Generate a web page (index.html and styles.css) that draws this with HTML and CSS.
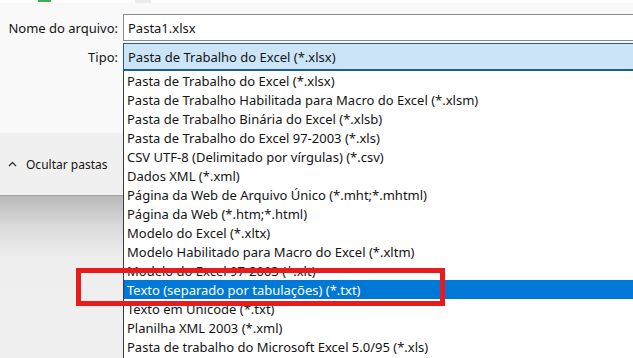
FILE: index.html
```html
<!DOCTYPE html>
<html>
<head>
  <meta charset="UTF-8">
  <title>Salvar como</title>
  <link rel="stylesheet" href="styles.css">
</head>
<body>
  <div class="page">
    <div class="strip">
      <span class="strip-icon"></span>
      <span class="strip-tab"></span>
    </div>

    <div class="dialog">
      <div class="side">
        <div class="labels">
          <div class="label label-name">Nome do arquivo:</div>
          <div class="label label-type">Tipo:</div>
        </div>
        <div class="side-fill"></div>
        <div class="footer">
          <svg class="chevron" width="9" height="6" viewBox="0 0 9 6">
            <polyline points="1,5 4.5,1.5 8,5" fill="none" stroke="#333" stroke-width="1.3"/>
          </svg>
          <span>Ocultar pastas</span>
        </div>
        <div class="dim"></div>
      </div>

      <div class="main">
        <div class="field">Pasta1.xlsx</div>
        <div class="combo">Pasta de Trabalho do Excel (*.xlsx)</div>
        <ul class="list">
          <li>Pasta de Trabalho do Excel (*.xlsx)</li>
          <li>Pasta de Trabalho Habilitada para Macro do Excel (*.xlsm)</li>
          <li>Pasta de Trabalho Binária do Excel (*.xlsb)</li>
          <li>Pasta de Trabalho do Excel 97-2003 (*.xls)</li>
          <li>CSV UTF-8 (Delimitado por vírgulas) (*.csv)</li>
          <li>Dados XML (*.xml)</li>
          <li>Página da Web de Arquivo Único (*.mht;*.mhtml)</li>
          <li>Página da Web (*.htm;*.html)</li>
          <li>Modelo do Excel (*.xltx)</li>
          <li>Modelo Habilitado para Macro do Excel (*.xltm)</li>
          <li>Modelo do Excel 97-2003 (*.xlt)</li>
          <li class="selected">Texto (separado por tabulações) (*.txt)</li>
          <li>Texto em Unicode (*.txt)</li>
          <li>Planilha XML 2003 (*.xml)</li>
          <li>Pasta de trabalho do Microsoft Excel 5.0/95 (*.xls)</li>
        </ul>
      </div>
    </div>

    <div class="highlight-box"></div>
  </div>
</body>
</html>
```

FILE: styles.css
```css
:root {
  --panel: #f9f9f9;
  --footer: #f0f0f0;
  --text: #141414;
  --field-border: #8a8a8a;
  --combo-bg: #cce4f7;
  --combo-border: #1d5f93;
  --select-blue: #0078d7;
  --mark-red: #e81c1c;
}

html, body {
  margin: 0;
  padding: 0;
}

body {
  width: 633px;
  height: 358px;
  overflow: hidden;
  background: var(--panel);
  color: var(--text);
  font-family: 'Noto Sans', 'Open Sans', sans-serif;
  font-size: 13px;
}

.page {
  position: relative;
  display: flex;
  flex-direction: column;
  height: 358px;
}

.strip {
  display: flex;
  height: 3px;
  background: #fdfdfd;
}

.strip-icon {
  width: 13px;
  height: 2px;
  margin-left: 38px;
  background: #3fae55;
}

.strip-tab {
  width: 16px;
  height: 3px;
  margin-left: 84px;
  background: #ebebeb;
}

.dialog {
  display: flex;
  flex: 1;
  min-height: 0;
}

/* left column */

.side {
  display: flex;
  flex-direction: column;
  width: 123px;
  flex-shrink: 0;
}

.labels {
  display: flex;
  flex-direction: column;
  gap: 2px;
  padding-top: 11px;
}

.label {
  display: flex;
  align-items: center;
  justify-content: flex-end;
  padding-right: 5px;
  white-space: nowrap;
}

.label-name {
  height: 27px;
}

.label-type {
  height: 28px;
}

.side-fill {
  height: 62px;
  background: var(--panel);
}

.footer {
  display: flex;
  align-items: center;
  gap: 9px;
  height: 63px;
  padding-left: 8px;
  background: var(--footer);
  border-bottom: 1px solid #a3a3a3;
  box-sizing: border-box;
  font-size: 12px;
  white-space: nowrap;
}

.chevron {
  flex-shrink: 0;
}

.dim {
  flex: 1;
  background: linear-gradient(to bottom, #b9b9b9 0px, #dadada 30px, #eeeeee 62px, #f0f0f0 100%);
}

/* right column */

.main {
  display: flex;
  flex-direction: column;
  flex: 1;
  padding-top: 11px;
  gap: 2px;
  min-width: 0;
}

.field {
  display: flex;
  align-items: center;
  height: 27px;
  padding-left: 4px;
  background: #ffffff;
  border: 1px solid var(--field-border);
  border-right: none;
  box-sizing: border-box;
}

.combo {
  display: flex;
  align-items: center;
  height: 28px;
  padding-left: 4px;
  background: var(--combo-bg);
  border: 1px solid var(--combo-border);
  border-bottom-width: 2px;
  border-right: none;
  box-sizing: border-box;
}

.list {
  flex: 1;
  margin: -2px 0 0;
  padding: 0;
  list-style: none;
  background: #ffffff;
  border-left: 1px solid #3a3a3a;
  white-space: nowrap;
}

.list li {
  display: flex;
  align-items: center;
  height: 19px;
  padding-left: 3px;
}

.list li.selected {
  background: var(--select-blue);
  color: #ffffff;
}

/* annotation drawn over the screenshot */

.highlight-box {
  position: absolute;
  left: 76px;
  top: 268px;
  width: 369px;
  height: 38px;
  border: 5px solid var(--mark-red);
  box-sizing: border-box;
  pointer-events: none;
}
```
